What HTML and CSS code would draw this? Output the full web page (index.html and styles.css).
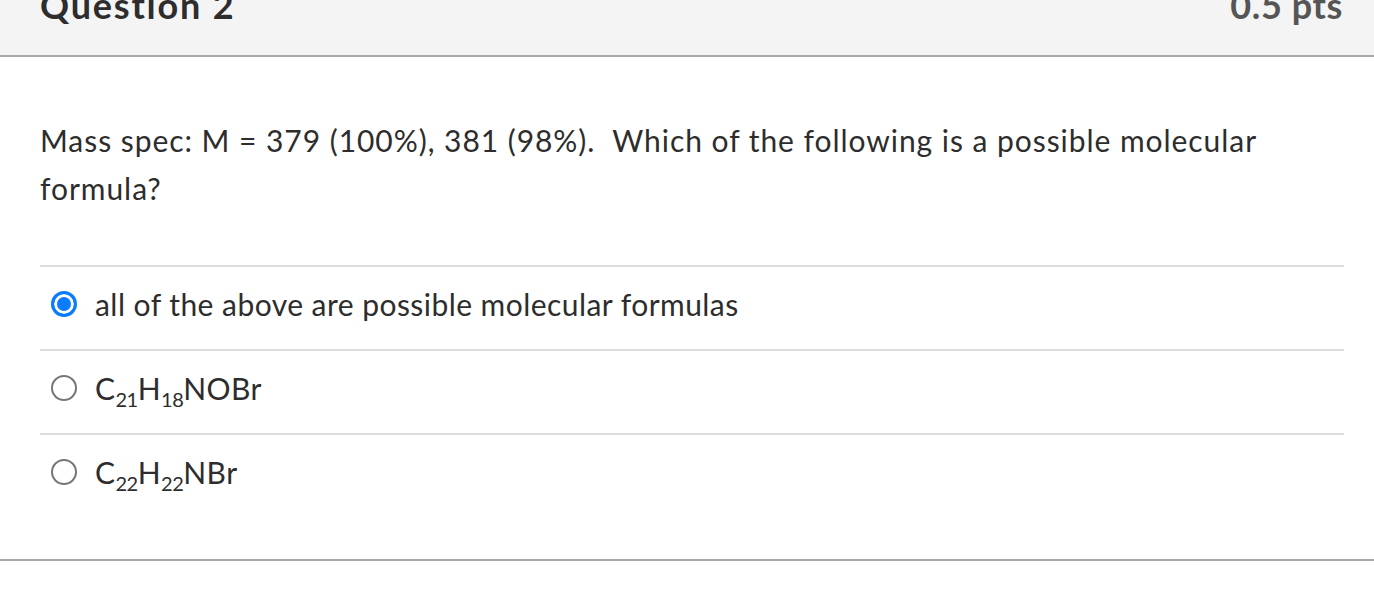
FILE: index.html
```html
<!DOCTYPE html>
<html>
<head>
<meta charset="utf-8">
<link rel="stylesheet" href="styles.css">
</head>
<body>
<div class="question">
  <div class="header">
    <h2 class="title">Question 2</h2>
    <span class="pts">0.5 pts</span>
  </div>
  <div class="body">
    <p class="text">Mass spec: M = 379 (100%), 381 (98%).&nbsp; Which of the following is a possible molecular formula?</p>
    <div class="answers">
      <div class="answer">
        <span class="radio checked"></span>
        <span class="label">all of the above are possible molecular formulas</span>
      </div>
      <div class="answer">
        <span class="radio"></span>
        <span class="label">C<sub>21</sub>H<sub>18</sub>NOBr</span>
      </div>
      <div class="answer">
        <span class="radio"></span>
        <span class="label">C<sub>22</sub>H<sub>22</sub>NBr</span>
      </div>
    </div>
  </div>
  <div class="footer"></div>
</div>
</body>
</html>
```
FILE: styles.css
```css
html, body {
  margin: 0;
  padding: 0;
  background: #fff;
}
body {
  font-family: Lato, "Open Sans", sans-serif;
  color: #2d2d2d;
}
.question {
  display: flex;
  flex-direction: column;
}
.header {
  background: #f4f4f4;
  border-bottom: 2px solid #aaaaaa;
  margin-top: -20px;
  padding: 0 31px 0 40px;
  display: flex;
  justify-content: space-between;
  align-items: flex-start;
  height: 75px;
}
.title {
  margin: 0;
  font-size: 36px;
  font-weight: 700;
  color: #2d2d2d;
  line-height: 50px;
  letter-spacing: 1.8px;
}
.pts {
  font-size: 36px;
  font-weight: 700;
  color: #555;
  line-height: 50px;
  letter-spacing: 0.6px;
}
.body {
  padding: 0 30px 0 40px;
}
.text {
  margin: 59px 0 0 0;
  font-size: 30px;
  line-height: 48px;
  letter-spacing: 0.95px;
}
.answers {
  margin-top: 53px;
  display: flex;
  flex-direction: column;
}
.answer {
  border-top: 2px solid #dddddd;
  height: 84px;
  box-sizing: border-box;
  padding: 0 0 8px 11px;
  display: flex;
  align-items: center;
  gap: 18px;
  font-size: 30px;
  letter-spacing: 0.45px;
}
.radio {
  width: 26px;
  height: 26px;
  border-radius: 50%;
  border: 2px solid #767676;
  box-sizing: border-box;
  flex: none;
}
.radio.checked {
  border: 3px solid #0a7cff;
  background: #0a7cff;
  box-shadow: inset 0 0 0 3px #fff;
}
.label sub {
  font-size: 20px;
  vertical-align: -7px;
  line-height: 0;
  letter-spacing: -0.5px;
}
.footer {
  margin-top: 42px;
  border-top: 2px solid #aaaaaa;
}
```
